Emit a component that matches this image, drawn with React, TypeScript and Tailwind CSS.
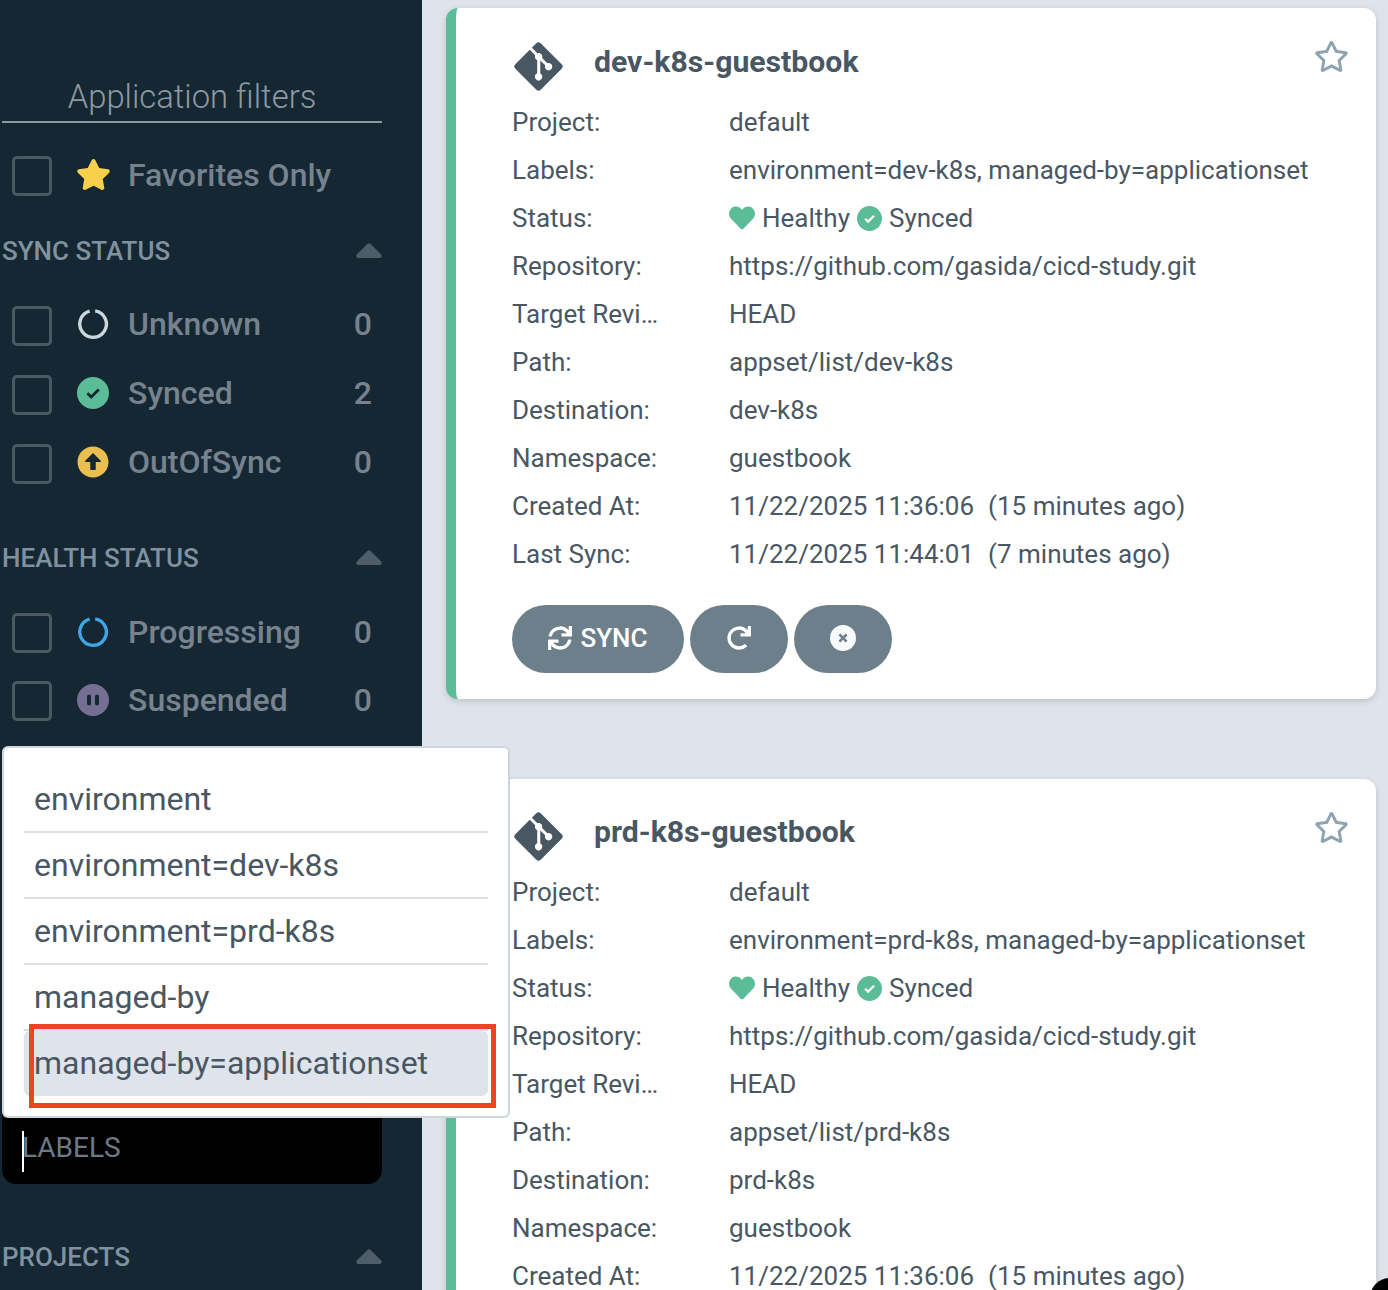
import type { ReactNode } from 'react';
import { FaStar, FaRegStar, FaArrowAltCircleUp, FaHeart, FaSync, FaRedo, FaGitAlt } from 'react-icons/fa';

function Ring({ className }: { className: string }) {
  return (
    <svg viewBox="0 0 32 32" className={className} fill="none" stroke="currentColor" strokeWidth={3.4}>
      <path d="M18.2 2.9 A13.3 13.3 0 1 1 12.6 3.2" />
    </svg>
  );
}

function Caret() {
  return (
    <svg viewBox="0 0 26 15" className="w-[26px] h-[15px] text-[#4f5d69] -mt-[2px]" fill="currentColor">
      <path d="M11.4 1 L.8 11.6 C-.4 13 .4 15 2.2 15 H23.8 C25.6 15 26.4 13 25.2 11.6 L14.6 1 C13.7 .1 12.3 .1 11.4 1 Z" />
    </svg>
  );
}

function CheckDot({ className, mark }: { className: string; mark: string }) {
  return (
    <svg viewBox="0 0 32 32" className={className}>
      <circle cx="16" cy="16" r="16" fill="#5bbd98" />
      <path d="M10.4 16.2 l3.8 3.8 l7.6 -7.6" fill="none" stroke={mark} strokeWidth={2.8} />
    </svg>
  );
}

function PauseDot() {
  return (
    <svg viewBox="0 0 32 32" className="w-8 h-8">
      <circle cx="16" cy="16" r="16" fill="#766f94" />
      <rect x="10" y="10.5" width="4" height="11" rx="2" fill="#152733" />
      <rect x="18" y="10.5" width="4" height="11" rx="2" fill="#152733" />
    </svg>
  );
}

function CancelDot() {
  return (
    <svg viewBox="0 0 26 26" className="w-[26px] h-[26px]">
      <circle cx="13" cy="13" r="13" fill="#f8fafb" />
      <path d="M9.4 9.4 L16.6 16.6 M16.6 9.4 L9.4 16.6" stroke="#6d7f8b" strokeWidth={2.6} />
    </svg>
  );
}

function FilterRow({ icon, label, count, className = 'h-[69px]', lift = 'pb-[3px]' }: { icon: ReactNode; label: string; count?: number; className?: string; lift?: string }) {
  return (
    <div className={`flex items-center pl-[10px] pr-[10px] ${className}`}>
      <div className="w-10 h-10 rounded-[5px] border-[3px] border-[#4b5964] shrink-0" />
      <div className={`flex flex-1 items-center ${lift}`}>
        <div className="w-8 h-8 ml-[25px] flex items-center justify-center shrink-0">{icon}</div>
        <span className="ml-[19px] text-[32px] font-medium text-[#76838e] leading-none">{label}</span>
        {count !== undefined && <span className="ml-auto text-[32px] font-medium text-[#76838e] leading-none">{count}</span>}
      </div>
    </div>
  );
}

function SectionHeader({ title }: { title: string }) {
  return (
    <div className="flex items-center justify-between h-8">
      <span className="text-[26px] font-medium text-[#8092a0] leading-none">{title}</span>
      <Caret />
    </div>
  );
}

type Row = { k: string; v?: string; ago?: string };

const rowsOf = (env: string): Row[] => [
  { k: 'Project:', v: 'default' },
  { k: 'Labels:', v: `environment=${env}, managed-by=applicationset` },
  { k: 'Status:' },
  { k: 'Repository:', v: 'https://github.com/gasida/cicd-study.git' },
  { k: 'Target Revi…', v: 'HEAD' },
  { k: 'Path:', v: `appset/list/${env}` },
  { k: 'Destination:', v: env },
  { k: 'Namespace:', v: 'guestbook' },
  { k: 'Created At:', v: '11/22/2025 11:36:06', ago: '(15 minutes ago)' },
  { k: 'Last Sync:', v: '11/22/2025 11:44:01', ago: '(7 minutes ago)' },
];

function AppCard({ env, top }: { env: string; top: string }) {
  return (
    <div className={`relative bg-white rounded-[12px] border-l-[10px] border-[#5bbd98] shadow-[0_2px_6px_rgba(0,0,0,0.16)] pl-[56px] pb-[26px] shrink-0 ${top}`}>
      <FaRegStar className="absolute right-[27px] top-[31px] w-[35px] h-[35px] text-[#8fa4b1]" />
      <div className="flex items-center h-[48px] mb-[12px]">
        <FaGitAlt className="w-[55px] h-[55px] text-[#495763] shrink-0 -ml-[1px] mt-[8px]" />
        <span className="ml-[28px] text-[30.2px] font-bold text-[#495763] leading-none">{env}-guestbook</span>
      </div>
      {rowsOf(env).map((r) => (
        <div key={r.k} className="flex items-center h-12 text-[26px] text-[#495763] leading-none">
          <span className="w-[217px] shrink-0">{r.k}</span>
          {r.v ?? (
            <span className="flex items-center">
              <FaHeart className="w-[26px] h-[26px] text-[#5bbd98]" />
              <span className="ml-[7px]">Healthy</span>
              <CheckDot className="ml-[7px] w-[25px] h-[25px]" mark="#ffffff" />
              <span className="ml-[7px]">Synced</span>
            </span>
          )}
          {r.ago && <span className="ml-[14px]">{r.ago}</span>}
        </div>
      ))}
      <div className="flex gap-[6px] mt-[27px]">
        <button className="flex items-center justify-center w-[172px] h-[68px] pb-[2px] rounded-[34px] bg-[#6d7f8b] text-white text-[26px] font-medium leading-none">
          <FaSync className="w-[24px] h-[24px] mr-[8px]" />SYNC
        </button>
        <button className="flex items-center justify-center w-[98px] h-[68px] pb-[2px] rounded-[34px] bg-[#6d7f8b] text-white">
          <FaRedo className="w-[24px] h-[24px]" />
        </button>
        <button className="flex items-center justify-center w-[98px] h-[68px] pb-[2px] rounded-[34px] bg-[#6d7f8b] text-white">
          <CancelDot />
        </button>
      </div>
    </div>
  );
}

const suggestions = ['environment', 'environment=dev-k8s', 'environment=prd-k8s', 'managed-by'];

export default function App() {
  return (
    <div className="relative flex w-[1388px] h-[1290px] overflow-hidden bg-[#dfe4ec]" style={{ fontFamily: 'Roboto, sans-serif' }}>
      <aside className="w-[422px] shrink-0 bg-[#152733] pl-[2px] pr-[40px] pt-[74px]">
        <div className="h-[49px] border-b-2 border-[#8d99a2] text-center text-[32.8px] font-light text-[#8d99a2] leading-[46px]">
          Application filters
        </div>
        <FilterRow className="h-[69px] mt-[18px]" lift="pb-[2px]" icon={<FaStar className="w-[35px] h-[35px] shrink-0 text-[#f8d04b]" />} label="Favorites Only" />
        <div className="mt-[25px]"><SectionHeader title="SYNC STATUS" /></div>
        <div className="mt-[24px]">
          <FilterRow icon={<Ring className="w-8 h-8 text-[#ccd6dd]" />} label="Unknown" count={0} />
          <FilterRow icon={<CheckDot className="w-8 h-8" mark="#152733" />} label="Synced" count={2} />
          <FilterRow icon={<FaArrowAltCircleUp className="w-8 h-8 text-[#eabf4d]" />} label="OutOfSync" count={0} />
        </div>
        <div className="mt-[44px]"><SectionHeader title="HEALTH STATUS" /></div>
        <div className="mt-[25px]">
          <FilterRow className="h-[68px]" icon={<Ring className="w-8 h-8 text-[#3fa6e4]" />} label="Progressing" count={0} />
          <FilterRow className="h-[68px]" icon={<PauseDot />} label="Suspended" count={0} />
        </div>
        <div className="mt-[377px] h-[72px] bg-black rounded-b-[14px] flex items-center pl-[20px]">
          <div className="w-[2px] h-[41px] bg-white mt-[6px]" />
          <span className="text-[28px] text-[#6d7a85] leading-none -ml-[2px]">LABELS</span>
        </div>
        <div className="mt-[57px]"><SectionHeader title="PROJECTS" /></div>
      </aside>

      <main className="flex-1 min-w-0 flex flex-col gap-[80px] pl-[24px] pr-[12px] pt-[8px]">
        <AppCard env="dev-k8s" top="pt-[30px]" />
        <AppCard env="prd-k8s" top="pt-[29px]" />
      </main>

      <div className="absolute left-[2px] top-[746px] w-[508px] h-[372px] bg-white border-2 border-[#ccd6dd] rounded-[6px] px-[20px] pt-[19px]">
        {suggestions.map((s) => (
          <div key={s} className="h-[66px] border-b-2 border-[#dce1e6] flex items-center pl-[10px] text-[32px] text-[#495763] leading-none">{s}</div>
        ))}
        <div className="h-[65px] pb-[2px] bg-[#dfe4ec] rounded-[6px] flex items-center pl-[10px] text-[32px] text-[#495763] leading-none">managed-by=applicationset</div>
        <div className="absolute left-[25px] top-[276px] w-[467px] h-[84px] border-[5px] border-[#ee4324]" />
      </div>

      <div className="absolute right-[-20px] bottom-[-20px] w-[38px] h-[32px] bg-black rounded-tl-[20px]" />
    </div>
  );
}
